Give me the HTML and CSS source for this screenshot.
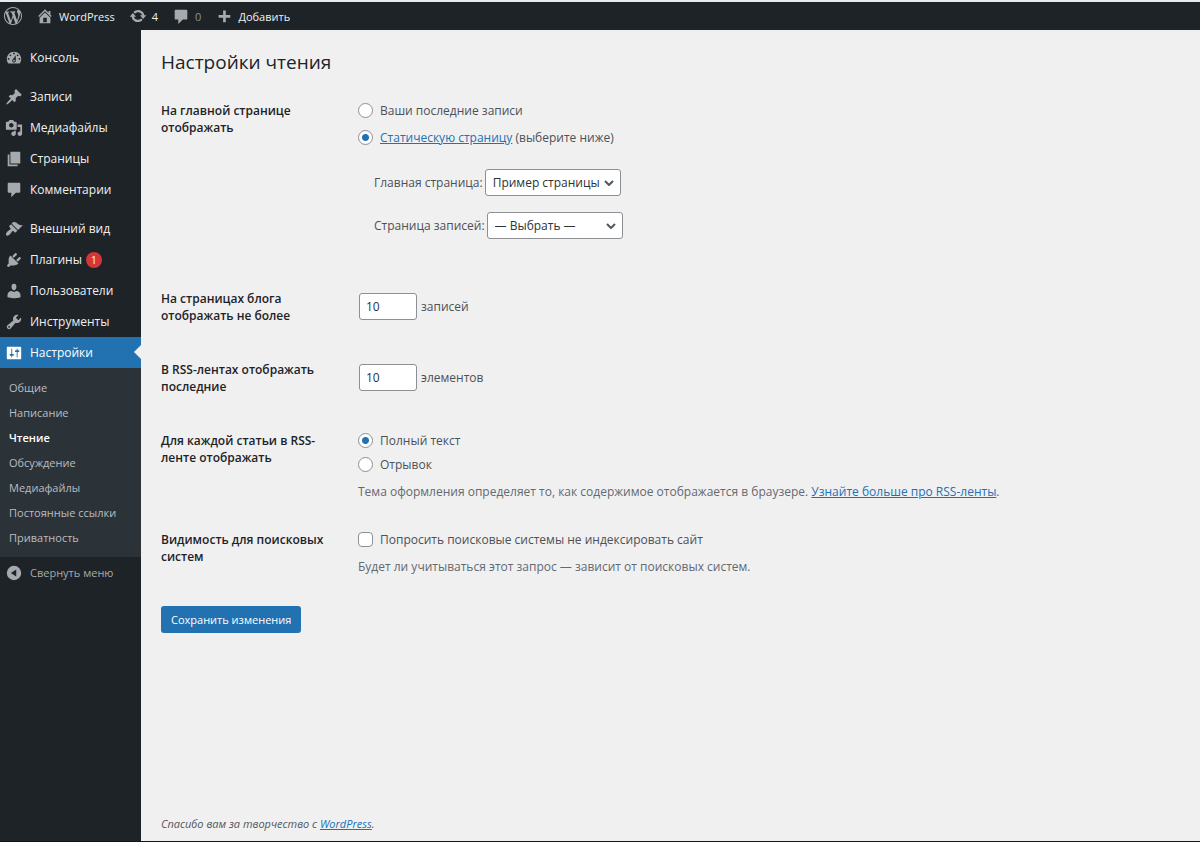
FILE: index.html
```html
<!DOCTYPE html>
<html lang="ru">
<head>
<meta charset="utf-8">
<meta name="viewport" content="width=device-width, initial-scale=1">
<title>Настройки чтения — WordPress</title>
<link rel="stylesheet" href="styles.css">
</head>
<body>
<header class="adminbar">
  <a class="bar-item" href="#" aria-label="О WordPress"><svg class="icon" viewBox="0 0 20 20"><path d="M20 10c0-5.51-4.49-10-10-10C4.48 0 0 4.49 0 10c0 5.52 4.48 10 10 10 5.51 0 10-4.48 10-10zM7.78 15.37L4.37 6.22c.55-.02 1.17-.08 1.17-.08.5-.06.44-1.13-.06-1.11 0 0-1.45.11-2.37.11-.18 0-.37 0-.58-.01C4.12 2.69 6.87 1.11 10 1.11c2.33 0 4.45.87 6.05 2.34-.68-.11-1.65.39-1.65 1.58 0 .74.45 1.36.9 2.1.35.61.55 1.36.55 2.46 0 1.49-1.4 5-1.4 5l-3.03-8.37c.54-.02.82-.17.82-.17.5-.05.44-1.25-.06-1.22 0 0-1.44.12-2.38.12-.87 0-2.33-.12-2.33-.12-.5-.03-.56 1.2-.06 1.22l.92.08 1.26 3.41zM17.41 10c.24-.64.74-1.87.43-4.25.7 1.29 1.05 2.71 1.05 4.25 0 3.29-1.73 6.24-4.4 7.78.97-2.59 1.94-5.2 2.92-7.78zM6.1 18.09C3.12 16.65 1.11 13.53 1.11 10c0-1.3.23-2.48.72-3.59C3.25 10.3 4.67 14.2 6.1 18.09zm4.03-6.63l2.58 6.98c-.86.29-1.76.45-2.71.45-.79 0-1.57-.11-2.29-.33.81-2.38 1.62-4.74 2.42-7.1z"/></svg></a>
  <a class="bar-item" href="#"><svg class="icon" viewBox="0 0 20 20"><path d="M16 8.5l1.53 1.53-1.06 1.06L10 4.6l-6.47 6.49-1.06-1.06L10 2.5l4 4v-2h2v4zm-6-2.46l6 5.99V18H4v-5.97zM12 17v-5H8v5h4z"/></svg>WordPress</a>
  <a class="bar-item" href="#"><svg class="icon" viewBox="0 0 20 20"><path d="M10.2 3.28c3.53 0 6.43 2.61 6.92 6h2.08l-3.5 4-3.5-4h2.32c-.45-1.97-2.21-3.45-4.32-3.45-1.45 0-2.73.71-3.54 1.78L4.95 5.66C6.23 4.2 8.11 3.28 10.2 3.28zm-.4 13.44c-3.52 0-6.43-2.61-6.92-6H.8l3.5-4c1.17 1.33 2.33 2.67 3.5 4H5.48c.45 1.97 2.21 3.45 4.32 3.45 1.45 0 2.73-.71 3.54-1.78l1.71 1.95c-1.28 1.46-3.15 2.38-5.25 2.38z"/></svg>4</a>
  <a class="bar-item bar-muted" href="#"><svg class="icon" viewBox="0 0 20 20"><path d="M4 3h12c.55 0 1 .45 1 1v9c0 .55-.45 1-1 1h-4l-5 5v-5H4c-.55 0-1-.45-1-1V4c0-.55.45-1 1-1z"/></svg>0</a>
  <a class="bar-item" href="#"><svg class="icon" viewBox="0 0 20 20"><path d="M17 9v3h-5v5H9v-5H4V9h5V4h3v5z"/></svg>Добавить</a>
</header>
<div class="layout">
  <nav class="sidebar" aria-label="Главное меню">
    <div class="menu-group">
      <a class="menu-item" href="#"><svg class="icon" viewBox="0 0 20 20"><path d="M3.76 16h12.48c1.1-1.37 1.76-3.11 1.76-5 0-4.42-3.58-8-8-8s-8 3.58-8 8c0 1.89.66 3.63 1.76 5zM10 4c.55 0 1 .45 1 1s-.45 1-1 1-1-.45-1-1 .45-1 1-1zM6 6c.55 0 1 .45 1 1s-.45 1-1 1-1-.45-1-1 .45-1 1-1zm8 0c.55 0 1 .45 1 1s-.45 1-1 1-1-.45-1-1 .45-1 1-1zm-5.37 5.55L12 7v6c0 1.1-.9 2-2 2s-2-.9-2-2c0-.57.24-1.08.63-1.45zM4 10c.55 0 1 .45 1 1s-.45 1-1 1-1-.45-1-1 .45-1 1-1zm12 0c.55 0 1 .45 1 1s-.45 1-1 1-1-.45-1-1 .45-1 1-1zm-5 3c0-.55-.45-1-1-1s-1 .45-1 1 .45 1 1 1 1-.45 1-1z"/></svg>Консоль</a>
    </div>
    <div class="menu-group">
      <a class="menu-item" href="#"><svg class="icon" viewBox="0 0 20 20"><path d="M10.44 3.02l1.82-1.82 6.36 6.35-1.83 1.82c-1.05-.68-2.48-.57-3.41.36l-.75.75c-.92.93-1.04 2.35-.35 3.41l-1.83 1.82-2.41-2.41-2.8 2.79c-.42.42-3.38 2.71-3.8 2.29s1.86-3.39 2.28-3.81l2.79-2.79L4.1 9.36l1.83-1.82c1.05.69 2.48.57 3.4-.36l.75-.75c.93-.92 1.05-2.35.36-3.41z"/></svg>Записи</a>
      <a class="menu-item" href="#"><svg class="icon" viewBox="0 0 20 20"><path d="M13 11V4c0-.55-.45-1-1-1h-1.67L9 1H5L3.67 3H2c-.55 0-1 .45-1 1v7c0 .55.45 1 1 1h10c.55 0 1-.45 1-1zM7 4.5c1.38 0 2.5 1.12 2.5 2.5S8.38 9.5 7 9.5 4.5 8.38 4.5 7 5.62 4.5 7 4.5zM14 6h5v10.5c0 1.38-1.12 2.5-2.5 2.5S14 17.88 14 16.5s1.12-2.5 2.5-2.5c.17 0 .34.02.5.05V9h-3V6zm-4 8.05V13h2v3.5c0 1.38-1.12 2.5-2.5 2.5S7 17.88 7 16.5 8.12 14 9.5 14c.17 0 .34.02.5.05z"/></svg>Медиафайлы</a>
      <a class="menu-item" href="#"><svg class="icon" viewBox="0 0 20 20"><path d="M6 15V2h11v13H6zm-1 1h9v2H3V5h2v11z"/></svg>Страницы</a>
      <a class="menu-item" href="#"><svg class="icon" viewBox="0 0 20 20"><path d="M4 2h12c.55 0 1 .45 1 1v9c0 .55-.45 1-1 1h-4l-5 5v-5H4c-.55 0-1-.45-1-1V3c0-.55.45-1 1-1z"/></svg>Комментарии</a>
    </div>
    <div class="menu-group">
      <a class="menu-item" href="#"><svg class="icon" viewBox="0 0 20 20"><path d="M14.48 11.06L7.41 3.99l1.5-1.5c.5-.56 2.3-.47 3.51.32 1.21.8 1.43 1.28 2.91 2.1 1.18.64 2.45 1.26 4.45.85zm-.71.71L6.7 4.7 4.93 6.47c-.39.39-.39 1.02 0 1.41l1.06 1.06c.39.39.39 1.03 0 1.42-.6.6-1.43 1.11-2.21 1.69-.35.26-.7.53-1.01.84C1.43 14.23.4 16.08 1.4 17.07c.99 1 2.84-.03 4.18-1.36.31-.31.58-.66.85-1.02.57-.78 1.08-1.61 1.69-2.21.39-.39 1.02-.39 1.41 0l1.06 1.06c.39.39 1.02.39 1.41 0z"/></svg>Внешний вид</a>
      <a class="menu-item" href="#"><svg class="icon" viewBox="0 0 20 20"><path d="M13.11 4.36L9.87 7.6 8 5.73l3.24-3.24c.35-.34 1.05-.2 1.56.32.52.51.66 1.21.31 1.55zm-8 1.77l.91-1.12 9.01 9.01-1.19.84c-.71.71-2.63 1.16-3.82 1.16H6.14L4.9 17.26c-.59.59-1.54.59-2.12 0-.59-.58-.59-1.53 0-2.12l1.24-1.24v-3.88c0-1.13.4-3.19 1.09-3.89zm7.26 3.97l3.24-3.24c.34-.35 1.04-.21 1.55.31.52.51.66 1.21.31 1.55l-3.24 3.25z"/></svg>Плагины<span class="count">1</span></a>
      <a class="menu-item" href="#"><svg class="icon" viewBox="0 0 20 20"><path d="M10 9.25c-2.27 0-2.73-3.44-2.73-3.44C7 4.02 7.82 2 9.97 2c2.16 0 2.98 2.02 2.71 3.81 0 0-.41 3.44-2.68 3.44zM7.200 10L10 11.200 12.720 10c2.39 0 4.52 2.33 4.52 4.53v2.49s-3.65 1.13-7.24 1.13c-3.65 0-7.24-1.13-7.24-1.13v-2.49c0-2.25 1.94-4.53 4.44-4.53z"/></svg>Пользователи</a>
      <a class="menu-item" href="#"><svg class="icon" viewBox="0 0 20 20"><path d="M16.68 9.77c-1.34 1.34-3.3 1.67-4.95.99l-5.41 6.52c-.99.99-2.59.99-3.58 0s-.99-2.59 0-3.57l6.52-5.42c-.68-1.65-.35-3.61.99-4.95 1.28-1.28 3.12-1.62 4.72-1.06l-2.89 2.89 2.82 2.82 2.86-2.87c.53 1.58.18 3.39-1.08 4.65zM3.81 16.21c.4.39 1.04.39 1.43 0 .4-.4.4-1.04 0-1.43-.39-.4-1.03-.4-1.43 0-.39.39-.39 1.03 0 1.43z"/></svg>Инструменты</a>
      <a class="menu-item menu-current" href="#"><svg class="icon" viewBox="0 0 20 20"><path d="M18 16V4c0-.55-.45-1-1-1H3c-.55 0-1 .45-1 1v12c0 .55.45 1 1 1h14c.55 0 1-.45 1-1zM8 11h1c.55 0 1 .45 1 1s-.45 1-1 1H8v1.5c0 .28-.22.5-.5.5s-.5-.22-.5-.5V13H6c-.55 0-1-.45-1-1s.45-1 1-1h1V5.500c0-.28.22-.5.5-.5s.5.22.5.5V11zm5-2h-1c-.55 0-1-.45-1-1s.45-1 1-1h1V5.500c0-.28.22-.5.5-.5s.5.22.5.5V7h1c.55 0 1 .45 1 1s-.45 1-1 1h-1v5.500c0 .28-.22.5-.5.5s-.5-.22-.5-.5V9z"/></svg>Настройки</a>
    </div>
    <div class="submenu">
      <a class="sub-item" href="#">Общие</a>
      <a class="sub-item" href="#">Написание</a>
      <a class="sub-item sub-current" href="#" aria-current="page">Чтение</a>
      <a class="sub-item" href="#">Обсуждение</a>
      <a class="sub-item" href="#">Медиафайлы</a>
      <a class="sub-item" href="#">Постоянные ссылки</a>
      <a class="sub-item" href="#">Приватность</a>
    </div>
    <button class="menu-item collapse" type="button"><svg class="icon" viewBox="0 0 20 20"><path fill-rule="evenodd" d="M10 2a8 8 0 1 0 0 16a8 8 0 0 0 0-16zM12.500 14V6L6.500 10z"/></svg>Свернуть меню</button>
  </nav>
  <main class="content">
    <h1 class="title">Настройки чтения</h1>
    <form class="form">
      <div class="row" role="group" aria-labelledby="l-front">
        <div class="row-label" id="l-front">На главной странице отображать</div>
        <div class="field front">
          <div class="choice"><input type="radio" name="front" id="f-posts"><label for="f-posts">Ваши последние записи</label></div>
          <div class="choice"><input type="radio" name="front" id="f-page" checked><label for="f-page"><a class="link" href="#">Статическую страницу</a> (выберите ниже)</label></div>
          <div class="pages">
            <div class="page-pick"><label for="s-front">Главная страница:</label><span class="select"><select id="s-front"><option>Пример страницы</option></select><svg class="chevron" viewBox="0 0 10 6"><path d="M1 1l4 4 4-4"/></svg></span></div>
            <div class="page-pick"><label for="s-posts">Страница записей:</label><span class="select"><select id="s-posts"><option>— Выбрать —</option></select><svg class="chevron" viewBox="0 0 10 6"><path d="M1 1l4 4 4-4"/></svg></span></div>
          </div>
        </div>
      </div>
      <div class="row">
        <label class="row-label" for="n-posts">На страницах блога отображать не более</label>
        <div class="field number"><input type="text" inputmode="numeric" id="n-posts" value="10">записей</div>
      </div>
      <div class="row">
        <label class="row-label" for="n-rss">В RSS-лентах отображать последние</label>
        <div class="field number"><input type="text" inputmode="numeric" id="n-rss" value="10">элементов</div>
      </div>
      <div class="row" role="group" aria-labelledby="l-rss">
        <div class="row-label" id="l-rss">Для каждой статьи в RSS-ленте отображать</div>
        <div class="field stack">
          <div class="choice"><input type="radio" name="rss" id="r-full" checked><label for="r-full">Полный текст</label></div>
          <div class="choice"><input type="radio" name="rss" id="r-cut"><label for="r-cut">Отрывок</label></div>
          <p class="note">Тема оформления определяет то, как содержимое отображается в браузере. <a class="link" href="#">Узнайте больше про RSS-ленты</a>.</p>
        </div>
      </div>
      <div class="row" role="group" aria-labelledby="l-seo">
        <div class="row-label" id="l-seo">Видимость для поисковых систем</div>
        <div class="field stack">
          <div class="choice"><input type="checkbox" id="c-seo"><label for="c-seo">Попросить поисковые системы не индексировать сайт</label></div>
          <p class="note">Будет ли учитываться этот запрос — зависит от поисковых систем.</p>
        </div>
      </div>
      <button class="save" type="submit">Сохранить изменения</button>
    </form>
    <footer class="footer">Спасибо вам за творчество с <a class="link" href="#">WordPress</a>.</footer>
  </main>
</div>
</body>
</html>
```
FILE: styles.css
```css
* { box-sizing: border-box; }

body {
  margin: 0;
  min-height: 100vh;
  display: flex;
  flex-direction: column;
  border-top: 2px solid #e4eaee;
  border-bottom: 1px solid #101517;
  background: #f0f0f1;
  color: #4b5157;
  font: 12px/17px "Open Sans", "Noto Sans", sans-serif;
}

a { text-decoration: none; }

.link {
  color: #2271b1;
  text-decoration: underline;
}

.icon {
  width: 18px;
  height: 18px;
  flex: none;
  fill: #a7aaad;
}

.adminbar {
  display: flex;
  align-items: center;
  gap: 14px;
  height: 28px;
  padding: 0 4px;
  background: #1d2327;
  font-size: 11px;
}

.bar-item {
  display: flex;
  align-items: center;
  gap: 5px;
  color: #f0f0f1;
}

.bar-muted { color: #8c8f94; }

.layout {
  flex: 1;
  display: flex;
}

.sidebar {
  width: 141px;
  flex: none;
  padding-top: 12px;
  background: #1d2327;
}

.menu-group { margin-bottom: 8px; }

.menu-group:has(.menu-current) { margin-bottom: 0; }

.menu-item {
  position: relative;
  display: flex;
  align-items: center;
  height: 31px;
  padding-left: 5px;
  color: #f0f0f1;
}

.menu-item .icon { margin-right: 7px; }

.menu-current {
  background: #2271b1;
  color: #fff;
}

.menu-current .icon { fill: #fff; }

.menu-current::after {
  content: "";
  position: absolute;
  right: 0;
  top: 8px;
  border: 7px solid transparent;
  border-left: 0;
  border-right-color: #f0f0f1;
}

.count {
  width: 16px;
  height: 16px;
  margin-left: 4px;
  border-radius: 8px;
  background: #d63638;
  color: #fff;
  font-size: 10px;
  line-height: 16px;
  text-align: center;
}

.submenu {
  padding: 7px 0;
  background: #2c3338;
}

.sub-item {
  display: block;
  padding-left: 9px;
  color: #b9bdc1;
  font-size: 11px;
  line-height: 25px;
}

.sub-current {
  color: #fff;
  font-weight: 600;
}

.collapse {
  width: 100%;
  border: 0;
  background: none;
  color: #a7aaad;
  font: inherit;
  font-size: 11px;
  text-align: left;
}

.content {
  flex: 1;
  display: flex;
  flex-direction: column;
  padding: 18px 20px 9px;
}

.title {
  margin: 0 0 26px;
  color: #1d2327;
  font-size: 19px;
  line-height: 28px;
  font-weight: 400;
}

.row {
  display: grid;
  grid-template-columns: 170px 1fr;
  column-gap: 27px;
  margin-bottom: 31px;
}

.row-label {
  color: #1d2327;
  font-weight: 600;
}

.front {
  display: grid;
  gap: 10px;
  padding-bottom: 20px;
}

.choice {
  display: flex;
  align-items: center;
  gap: 7px;
}

.choice input {
  appearance: none;
  width: 15px;
  height: 15px;
  margin: 0;
  border: 1px solid #8c8f94;
  border-radius: 8px;
  background: #fff;
}

.choice input[type="checkbox"] { border-radius: 4px; }

.choice input[type="radio"]:checked {
  background: radial-gradient(circle, #2271b1 3px, #fff 4px);
}

.pages {
  display: grid;
  gap: 16px;
  padding: 13px 0 0 16px;
}

.page-pick {
  display: flex;
  align-items: center;
  gap: 2px;
}

.select {
  position: relative;
  display: flex;
}

.select select {
  appearance: none;
  width: 136px;
  height: 27px;
  padding: 0 16px 0 7px;
  border: 1px solid #8c8f94;
  border-radius: 3px;
  background: #fff;
  color: #2c3338;
  font: inherit;
}

.chevron {
  position: absolute;
  right: 7px;
  top: 11px;
  width: 10px;
  height: 6px;
  fill: none;
  stroke: #50575e;
  stroke-width: 2;
  pointer-events: none;
}

.number {
  display: flex;
  align-items: center;
  gap: 4px;
  padding: 3px 0 10px 1px;
}

.number input {
  width: 58px;
  height: 27px;
  padding: 0 6px;
  border: 1px solid #8c8f94;
  border-radius: 3px;
  background: #fff;
  color: #2c3338;
  font: inherit;
}

.stack {
  display: grid;
  gap: 7px;
}

.note {
  margin: 3px 0 0;
  color: #646970;
}

.save {
  height: 27px;
  padding: 0 10px;
  border: 0;
  border-radius: 3px;
  background: #2271b1;
  color: #fff;
  font: inherit;
  font-size: 11px;
}

.footer {
  margin-top: auto;
  color: #50575e;
  font-size: 11px;
  font-style: italic;
}
```
